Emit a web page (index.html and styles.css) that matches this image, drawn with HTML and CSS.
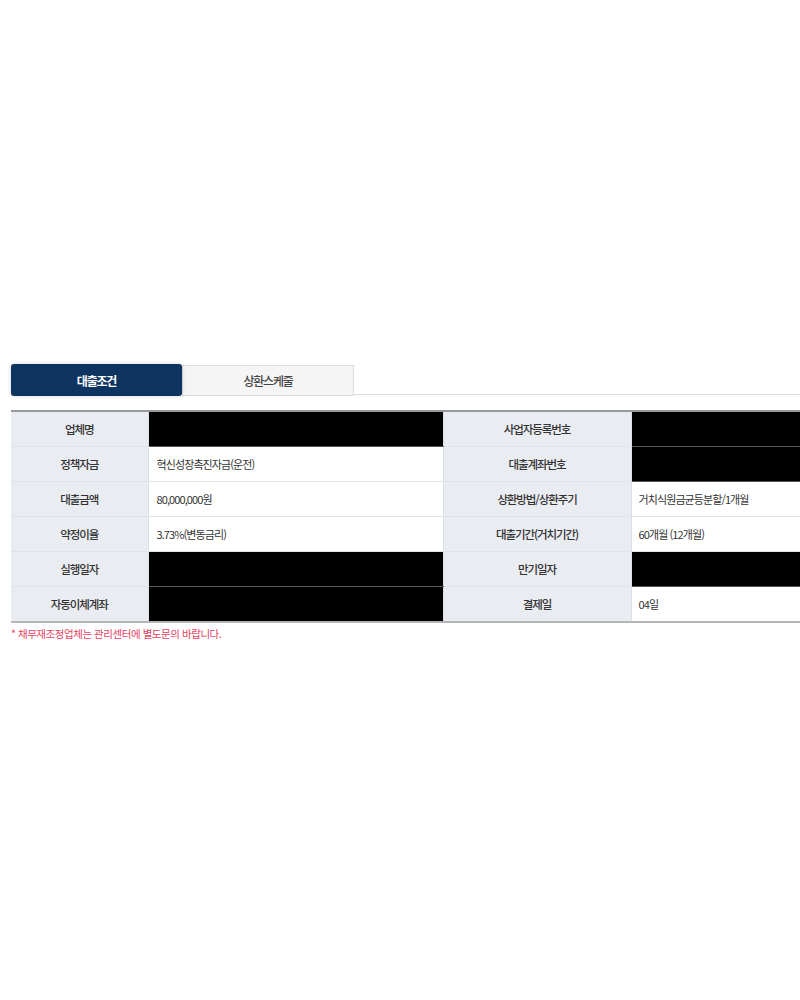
FILE: index.html
```html
<!DOCTYPE html>
<html lang="ko">
<head>
<meta charset="utf-8">
<title>대출조건</title>
<link rel="stylesheet" href="styles.css">
</head>
<body>
<div class="wrap">
  <div class="tabs">
    <div class="tab active">대출조건</div>
    <div class="tab">상환스케줄</div>
    <div class="tab-rest"></div>
  </div>
  <table class="info">
    <colgroup>
      <col class="c1"><col class="c2"><col class="c3"><col class="c4">
    </colgroup>
    <tr>
      <th>업체명</th><td class="masked"></td>
      <th>사업자등록번호</th><td class="masked"></td>
    </tr>
    <tr>
      <th>정책자금</th><td>혁신성장촉진자금(운전)</td>
      <th>대출계좌번호</th><td class="masked"></td>
    </tr>
    <tr>
      <th>대출금액</th><td>80,000,000원</td>
      <th>상환방법/상환주기</th><td>거치식원금균등분할/1개월</td>
    </tr>
    <tr>
      <th>약정이율</th><td>3.73%(변동금리)</td>
      <th>대출기간(거치기간)</th><td>60개월 (12개월)</td>
    </tr>
    <tr>
      <th>실행일자</th><td class="masked"></td>
      <th>만기일자</th><td class="masked"></td>
    </tr>
    <tr>
      <th>자동이체계좌</th><td class="masked"></td>
      <th>결제일</th><td>04일</td>
    </tr>
  </table>
  <p class="note">* 채무재조정업체는 관리센터에 별도문의 바랍니다.</p>
</div>
</body>
</html>
```

FILE: styles.css
```css
html, body {
  margin: 0;
  padding: 0;
  background: #fff;
  overflow-x: hidden;
}
body {
  font-family: "Noto Sans CJK KR", "Noto Sans", sans-serif;
  color: #333;
}
.wrap {
  padding: 364px 0 0 11px;
}
.tabs {
  display: flex;
  align-items: flex-end;
  height: 32px;
}
.tab {
  box-sizing: border-box;
  width: 172px;
  height: 31px;
  display: flex;
  align-items: center;
  justify-content: center;
  font-size: 12px;
  letter-spacing: -1.2px;
  font-weight: 500;
  color: #444;
  background: #f5f5f5;
  border: 1px solid #dcdcdc;
  border-bottom: 1px solid #d9dadf;
}
.tab.active {
  width: 171px;
  height: 32px;
  background: #0e3462;
  color: #fff;
  font-weight: 700;
  border: none;
  border-radius: 3px;
  box-shadow: 0 0 4px rgba(0,0,0,0.18);
  position: relative;
  z-index: 1;
}
.tab-rest {
  flex: 1;
  height: 1px;
  background: #d9dadf;
  margin-bottom: 1px;
}
.info {
  margin-top: 14px;
  width: 789px;
  border-collapse: collapse;
  table-layout: fixed;
  border-top: 2px solid #9a9a9a;
  border-bottom: 2px solid #b5b5b5;
  font-size: 11px;
}
.c1 { width: 137px; }
.c2 { width: 295px; }
.c3 { width: 188px; }
.c4 { width: 169px; }
.info th, .info td {
  height: 34px;
  padding: 0;
  border-bottom: 1px solid #e1e3e7;
  border-left: 1px solid #dadde2;
}
.info tr:last-child th, .info tr:last-child td {
  border-bottom: none;
}
.info th {
  background: #e9ecf1;
  font-weight: 500;
  font-size: 11.5px;
  letter-spacing: -1.1px;
  color: #333;
  text-align: center;
}
.info th:first-child {
  border-left: none;
}
.info td {
  text-align: left;
  padding-left: 8px;
  letter-spacing: -0.9px;
  color: #333;
  background: #fff;
}
.info td.num {
  letter-spacing: -1.2px;
}
.info td:last-child {
  padding-left: 7px;
}
.info td.masked {
  background: #000;
  border-bottom-color: #555;
}
.note {
  margin: 3px 0 0 0;
  font-size: 10.5px;
  letter-spacing: -0.45px;
  color: #e5405e;
}
```
